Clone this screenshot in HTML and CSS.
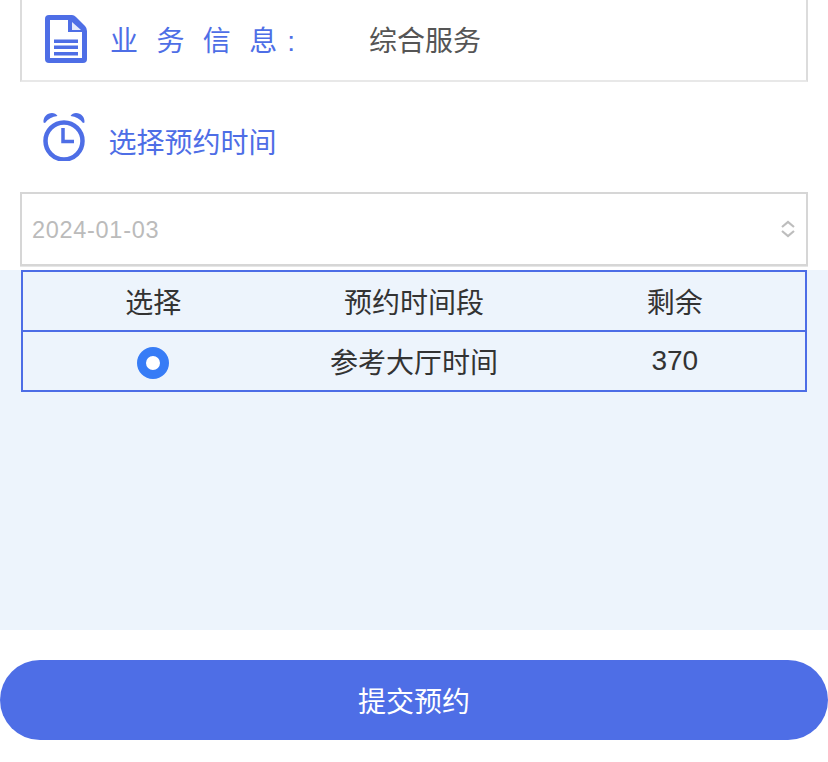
FILE: index.html
```html
<!DOCTYPE html>
<html lang="zh-CN">
<head>
  <meta charset="UTF-8" />
  <title>选择预约时间</title>
  <link rel="stylesheet" href="styles.css">
</head>
<body>
  <div class="info-card">
    <svg class="doc-icon" viewBox="0 0 42 48" width="42" height="48">
      <path fill="#4e6ee6" d="M4 0H27Q29 0 31 2L40 11Q42 13 42 16V44a4 4 0 0 1-4 4H4a4 4 0 0 1-4-4V4a4 4 0 0 1 4-4Z"/>
      <path fill="#fff" d="M5 5H23V17H37V43H5Z"/>
      <path fill="#fff" fill-opacity=".85" d="M27 7L36 15H27Z"/>
      <path fill="#4e6ee6" d="M9 24.500H33V28H9ZM9 30.500H33V34H9ZM9 37H33V40.500H9Z"/>
    </svg>
    <span class="info-label">业务信<span class="tight">息</span>:</span>
    <span class="info-value">综合服务</span>
  </div>

  <div class="section-title">
    <svg class="clock-icon" viewBox="0 0 44 48" width="44" height="48">
      <circle cx="22" cy="28" r="18.500" fill="none" stroke="#4e6ee6" stroke-width="4.500"/>
      <path fill="none" stroke="#4e6ee6" stroke-width="3.500" d="M21 15V28.500H32"/>
      <path fill="#4e6ee6" d="M1.500 9.500C1 4 5 0 10 0C12 0 14.500 1 15.500 3C10 3.500 6 6 3 10ZM42.500 9.500C43 4 39 0 34 0C32 0 29.500 1 28.500 3C34 3.500 38 6 41 10Z"/>
    </svg>
    <span>选择预约时间</span>
  </div>

  <div class="date-select">
    <span class="date-text">2024-01-03</span>
    <svg class="updown" viewBox="0 0 16 18" width="16" height="18">
      <path fill="none" stroke="#bdbdbd" stroke-width="2.200" d="M2 7L8 2L14 7M2 11L8 16L14 11"/>
    </svg>
  </div>

  <div class="table-area">
    <table class="slots">
      <thead>
        <tr><th>选择</th><th>预约时间段</th><th>剩余</th></tr>
      </thead>
      <tbody>
        <tr><td><span class="radio"></span></td><td>参考大厅时间</td><td>370</td></tr>
      </tbody>
    </table>
  </div>

  <button class="submit-btn">提交预约</button>
</body>
</html>
```

FILE: styles.css
```css
* {
  box-sizing: border-box;
}

body {
  margin: 0;
  background: #fff;
  font-family: "Liberation Sans", "Noto Sans CJK SC", sans-serif;
}

.info-card {
  display: flex;
  align-items: center;
  height: 82px;
  margin: 0 20px;
  padding: 0 0 2px 23px;
  border-left: 2px solid #dcdcdc;
  border-right: 2px solid #dcdcdc;
  border-bottom: 2px solid #e8e8e8;
}

.info-label {
  width: 259px;
  margin-left: 23px;
  font-size: 28px;
  letter-spacing: 18.4px;
  color: #4e6ee6;
  white-space: nowrap;
}

.tight {
  letter-spacing: 10px;
}

.info-value {
  font-size: 28px;
  color: #555;
}

.section-title {
  display: flex;
  align-items: center;
  height: 110px;
  padding-left: 42px;
  font-size: 28px;
  color: #4e6ee6;
}

.section-title span {
  margin-left: 22.5px;
  margin-top: 8px;
}

.date-select {
  display: flex;
  align-items: center;
  justify-content: space-between;
  height: 74px;
  margin: 0 20px;
  padding: 0 10px;
  border: 2px solid #d6d6d6;
  box-shadow: 0 1px 0 #e6e6e6;
  font-size: 23.5px;
  letter-spacing: 0.7px;
  color: #bbb;
}

.date-text {
  margin-top: 2px;
}

.table-area {
  height: 360px;
  margin-top: 4px;
  padding: 0 21px;
  background: #edf4fc;
}

.slots {
  width: 100%;
  border-collapse: collapse;
  table-layout: fixed;
  border: 2px solid #4d6de6;
  color: #333;
  font-size: 28px;
}

.slots th,
.slots td {
  height: 60px;
  padding: 0;
  text-align: center;
  font-weight: 400;
}

.slots thead tr {
  border-bottom: 2px solid #4d6de6;
}

.radio {
  display: block;
  width: 32px;
  height: 32px;
  margin: 4px auto 0;
  border: 9.5px solid #377cf6;
  border-radius: 50%;
  background: #fff;
}

.submit-btn {
  display: block;
  width: 100%;
  height: 80px;
  margin-top: 30px;
  border: 0;
  border-radius: 40px;
  background: #4e6ee6;
  color: #fff;
  font-family: inherit;
  font-size: 28px;
}
```
